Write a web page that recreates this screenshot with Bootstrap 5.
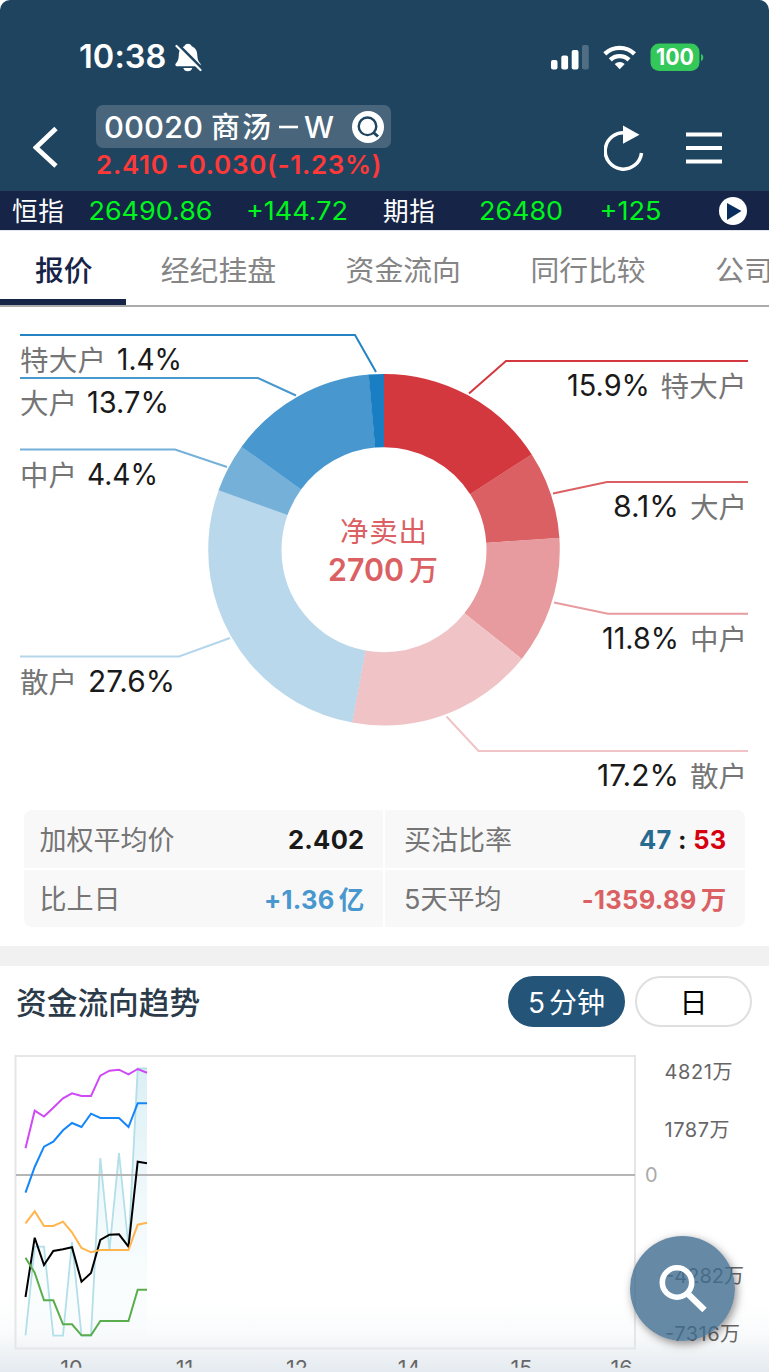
<!DOCTYPE html>
<html lang="zh-CN">
<head>
<meta charset="utf-8">
<meta name="viewport" content="width=device-width, initial-scale=1">
<title>00020 商汤－W</title>
<link href="https://cdn.jsdelivr.net/npm/bootstrap@5.3.0/dist/css/bootstrap.min.css" rel="stylesheet">
<style>
  html { background: #fff; }
  body { font-family: Inter, "Noto Sans CJK SC", sans-serif; width: 769px; height: 1372px; overflow: hidden; background: #fff; line-height: 1; white-space: nowrap; }
  svg { display: block; flex: none; }
  .app-head { background: #1e4460; height: 191px; border-radius: 10px 10px 0 0; color: #fff; }
  .status-bar { height: 105px; padding: 10px 65px 0 79px; }
  .clock { font-size: 32.5px; font-weight: 600; letter-spacing: .1px; }
  .title-bar { height: 86px; padding: 0 46px 0 33px; }
  .stock-pill { background: #48657b; border-radius: 7px; height: 43px; width: 295px; padding: 0 7px 0 8px; font-size: 29px; font-weight: 500; }
  .quote { color: #ff3838; font-size: 26px; font-weight: 600; line-height: 34px; letter-spacing: .7px; }
  .ticker { background: #152447; height: 39px; padding: 0 22px 0 12px; color: #fff; font-size: 26px; }
  .tab-strip { height: 77px; border-bottom: 2px solid #ababab; border-top: 1px solid #e4e4ec; flex-wrap: nowrap; overflow: hidden; }
  .tab-strip .nav-link { color: #858585; font-size: 28.8px; font-weight: 400; line-height: 74px; height: 74px; padding: 3px 0 0; margin: 0 34.8px; flex: none; border-radius: 0; }
  .tab-strip .nav-link.active { color: #152447; font-weight: 500; margin: 0; padding: 3px 34px 0 35px; width: 126px; box-shadow: inset 0 -6px #152447; }
  .pie-area { height: 503px; }
  .stats { height: 117px; margin: 0 24px; border-radius: 8px; overflow: hidden; display: grid; grid-template-columns: 359px 360px; grid-template-rows: 58px 57px; gap: 2px; }
  .stats > div { background: #f8f8f8; color: #757575; font-size: 27px; font-weight: 400; padding: 2px 18.5px 0 15.5px; }
  .stats > div:nth-child(even) { padding-left: 19px; }
  .stats strong { font-size: 25.5px; font-weight: 700; letter-spacing: .3px; color: #1a1a1a; }
  .band { height: 20px; background: #f1f1f1; margin-top: 19px; }
  .trend-head { height: 79px; padding: 10px 17px 0 16px; }
  .trend-head h2 { font-size: 30.7px; font-weight: 500; color: #2b3b4a; margin: 11px 0 0; line-height: 32px; }
  .range-btn { width: 117px; height: 51px; border-radius: 26px; font-size: 28px; line-height: 1; padding: 2px 0 0; border: 2px solid #dfdfdf; color: #000; font-weight: 400; }
  .range-btn.active { background: #245478 !important; border-color: #245478 !important; color: #fff !important; }
  .trend-area { height: 327px; background: linear-gradient(#fff 78%, #fafbfc 88%, #e4eaef 100%); }
  .zoom-fab { left: 630px; top: 1236px; width: 105px; height: 105px; background: rgba(64,109,143,.8); border: 0; border-radius: 50%; box-shadow: 2px 3px 9px rgba(50,40,40,.5); padding: 0; }
</style>
</head>
<body class="position-relative">
<header class="app-head">
  <div class="status-bar d-flex align-items-center">
    <span class="clock">10:38</span>
    <svg style="margin-left:7px" width="28" height="30" viewBox="173 43 28 30">
      <path d="M187 43.8c2 0 3.200 1 3.700 2.500 4 1.500 5.500 5 5.600 9 .1 4 1.200 6.400 3 8.300.9 1 .4 2.700-1 2.700h-22.500c-1.400 0-1.900-1.700-1-2.700 1.800-2 2.900-4.300 3-8.300.1-4 1.500-7.500 5.500-9 .5-1.500 1.700-2.500 3.700-2.500zM182.300 68h9c-.5 2-2.200 3.300-4.500 3.300s-4-1.300-4.500-3.300z" fill="#fff"/>
      <path d="M177.300 44.800L201 68.500" stroke="#1e4460" stroke-width="3"/>
      <path d="M175.500 46L199.500 70" stroke="#fff" stroke-width="2.200" stroke-linecap="round"/>
    </svg>
    <svg class="ms-auto" width="154" height="32" viewBox="550 42 154 32">
      <g fill="#fff"><rect x="551" y="60" width="6.500" height="9.500" rx="2"/><rect x="561.300" y="55.500" width="6.800" height="14" rx="2"/><rect x="571.700" y="50" width="6.800" height="19.500" rx="2"/><rect x="582" y="45" width="6.800" height="24.500" rx="2" opacity=".22"/></g>
      <g fill="none" stroke="#fff" stroke-width="4.400"><path d="M604.800 53.800a21.500 21.500 0 0 1 29.700 0"/><path d="M610.300 59.900a13.500 13.500 0 0 1 18.700 0"/></g>
      <path d="M619.700 69.300l-5-5.300a7.500 7.500 0 0 1 10 0z" fill="#fff"/>
      <rect x="650.500" y="43.500" width="49" height="27.500" rx="8.500" fill="#34c759"/><path d="M701 54c3 .8 3 6.200 0 7z" fill="#34c759"/>
      <text x="675" y="65.300" font-size="22.500" font-weight="700" fill="#fff" text-anchor="middle" textLength="38" lengthAdjust="spacingAndGlyphs">100</text>
    </svg>
  </div>
  <div class="title-bar d-flex">
    <svg class="mt-3" width="26" height="52" viewBox="33 121 26 52"><path d="M56 128.500L36 147.500l20 18.500" fill="none" stroke="#fff" stroke-width="4.800"/></svg>
    <div style="margin-left:37px">
      <div class="stock-pill d-flex align-items-center">
        <svg width="234" height="43" viewBox="104 105 234 43" fill="#fff" font-size="29" font-weight="500"><text x="104" y="137.500" font-size="30.300" textLength="99" lengthAdjust="spacingAndGlyphs">00020</text><text x="211" y="138" textLength="60">商汤</text><path d="M279 127h19" stroke="#fff" stroke-width="2.600"/><text x="304" y="137.500" font-size="30.300" textLength="30" lengthAdjust="spacingAndGlyphs">W</text></svg>
        <svg class="ms-auto" width="32" height="32" viewBox="0 0 32 32"><circle cx="16" cy="16" r="16" fill="#fff"/><circle cx="15.500" cy="15.300" r="8.800" fill="none" stroke="#1e4460" stroke-width="2.400"/><path d="M21.500 21.500l4.500 4" stroke="#1e4460" stroke-width="3"/></svg>
      </div>
      <div class="quote">2.410 -0.030(-1.23%)</div>
    </div>
    <svg class="ms-auto" style="margin-top:15px" width="119" height="60" viewBox="604 120 119 60"><path d="M626 132.900A18.200 18.200 0 1 0 641.500 153" fill="none" stroke="#fff" stroke-width="3.500"/><path d="M623 125.500l16.500 9.300-16.500 9z" fill="#fff"/><path d="M686 134.500h36M686 148h36M686 161.500h36" stroke="#fff" stroke-width="4"/></svg>
  </div>
</header>
<div class="ticker d-flex align-items-center">
  <svg width="652" height="39" viewBox="12 191 652 39" font-size="25.700" fill="#fff"><g><text x="12" y="220.500" textLength="52">恒指</text><text x="383" y="220.500" textLength="52">期指</text></g><g fill="#00f51d"><text x="88.500" y="220" textLength="124" lengthAdjust="spacingAndGlyphs">26490.86</text><text x="246" y="220" textLength="102" lengthAdjust="spacingAndGlyphs">+144.72</text><text x="479" y="220" textLength="84" lengthAdjust="spacingAndGlyphs">26480</text><text x="599.500" y="220" textLength="62" lengthAdjust="spacingAndGlyphs">+125</text></g></svg>
  <svg class="ms-auto" width="28" height="28" viewBox="0 0 28 28"><circle cx="14" cy="14" r="14" fill="#fff"/><path d="M8 6l14.500 8L8 23z" fill="#0b2d5e"/></svg>
</div>
<nav class="nav tab-strip">
  <a class="nav-link active" href="#">报价</a>
  <a class="nav-link" href="#">经纪挂盘</a>
  <a class="nav-link" href="#">资金流向</a>
  <a class="nav-link" href="#">同行比较</a>
  <a class="nav-link" href="#">公司</a>
</nav>
<main>
  <svg class="pie-area" width="769" height="503" viewBox="0 307 769 503">
    <g fill="none" stroke-width="73.300" transform="rotate(-90 384 549.700)">
      <circle cx="384" cy="549.700" r="139.150" pathLength="360" stroke="#d4383f" stroke-dasharray="57.200 400"/>
      <circle cx="384" cy="549.700" r="139.150" pathLength="360" stroke="#db6063" stroke-dasharray="29.100 400" stroke-dashoffset="-57.100"/>
      <circle cx="384" cy="549.700" r="139.150" pathLength="360" stroke="#e79b9f" stroke-dasharray="42.300 400" stroke-dashoffset="-86.100"/>
      <circle cx="384" cy="549.700" r="139.150" pathLength="360" stroke="#f0c3c6" stroke-dasharray="62.100 400" stroke-dashoffset="-128.400"/>
      <circle cx="384" cy="549.700" r="139.150" pathLength="360" stroke="#bad8ec" stroke-dasharray="99.500 400" stroke-dashoffset="-190.400"/>
      <circle cx="384" cy="549.700" r="139.150" pathLength="360" stroke="#75b0d9" stroke-dasharray="16.200 400" stroke-dashoffset="-289.800"/>
      <circle cx="384" cy="549.700" r="139.150" pathLength="360" stroke="#4897cf" stroke-dasharray="49.200 400" stroke-dashoffset="-305.900"/>
      <circle cx="384" cy="549.700" r="139.150" pathLength="360" stroke="#1a7fc2" stroke-dasharray="5 400" stroke-dashoffset="-355"/>
    </g>
    <g fill="none" stroke-width="2">
      <path d="M20 335H355L376 372" stroke="#2583c4"/>
      <path d="M20 378H258L296 395.500" stroke="#4897cf"/>
      <path d="M20 449.500H175L227 467" stroke="#75b0d9"/>
      <path d="M20 656.500H179L230 638" stroke="#b5d5ea"/>
      <path d="M748 361H506L469 393.500" stroke="#d4383f"/>
      <path d="M748 482H607L553 493.500" stroke="#db6063"/>
      <path d="M748 613.700H608L554 602.500" stroke="#e79b9f"/>
      <path d="M748 751H478.500L446.500 716.500" stroke="#f0c3c6"/>
    </g>
    <g font-size="28.500" fill="#757575">
      <text x="20" y="370.500" textLength="86">特大户</text><text x="20" y="413.500" textLength="57">大户</text><text x="20" y="485.500" textLength="57">中户</text><text x="20" y="692.500" textLength="57">散户</text>
      <text x="660.500" y="396.500" textLength="86">特大户</text><text x="690" y="517.500" textLength="57">大户</text><text x="690" y="649.500" textLength="57">中户</text><text x="690" y="786.500" textLength="57">散户</text>
    </g>
    <g font-size="29.500" fill="#1a1a1a">
      <text x="117" y="370" textLength="65" lengthAdjust="spacingAndGlyphs">1.4%</text><text x="87" y="413" textLength="82" lengthAdjust="spacingAndGlyphs">13.7%</text><text x="87" y="485" textLength="71" lengthAdjust="spacingAndGlyphs">4.4%</text><text x="88" y="692" textLength="87" lengthAdjust="spacingAndGlyphs">27.6%</text>
      <text x="567" y="396" textLength="83" lengthAdjust="spacingAndGlyphs">15.9%</text><text x="613" y="517" textLength="66" lengthAdjust="spacingAndGlyphs">8.1%</text><text x="602" y="649" textLength="77" lengthAdjust="spacingAndGlyphs">11.8%</text><text x="597" y="786" textLength="82" lengthAdjust="spacingAndGlyphs">17.2%</text>
    </g>
    <g fill="#db6063"><text x="340" y="541.500" font-size="28.500" textLength="87">净卖出</text><text x="328" y="580.500" font-size="31.500" font-weight="600" textLength="76" lengthAdjust="spacingAndGlyphs">2700</text><text x="409" y="581" font-size="29" font-weight="500">万</text></g>
  </svg>
  <section class="stats">
    <div class="d-flex align-items-center justify-content-between"><span>加权平均价</span><strong>2.402</strong></div>
    <div class="d-flex align-items-center justify-content-between"><span>买沽比率</span><strong><span style="color:#286b91">47</span> : <span style="color:#d7000f">53</span></strong></div>
    <div class="d-flex align-items-center justify-content-between"><span>比上日</span><strong style="color:#4897cf">+1.36<span class="ms-1">亿</span></strong></div>
    <div class="d-flex align-items-center justify-content-between"><span>5天平均</span><strong style="color:#db6063">-1359.89<span class="ms-1">万</span></strong></div>
  </section>
  <div class="band"></div>
  <section>
    <div class="trend-head d-flex justify-content-between">
      <h2>资金流向趋势</h2>
      <div class="d-flex gap-2"><button class="btn range-btn active">5<span style="margin-left:4px">分钟</span></button><button class="btn range-btn" style="margin-left:2px">日</button></div>
    </div>
    <svg class="trend-area" width="769" height="327" viewBox="0 1045 769 327">
      <defs><linearGradient id="flow" x1="0" y1="0" x2="0" y2="1"><stop offset="0" stop-color="#cfeaf1" stop-opacity=".75"/><stop offset="1" stop-color="#e8f6fa" stop-opacity=".1"/></linearGradient><clipPath id="axis"><path d="M0 1350h769v17.700H0z"/></clipPath></defs>
      <path d="M15.500 1348.500V1056H635V1348.500z" fill="none" stroke="#e5e6e7" stroke-width="2"/>
      <path d="M25.500 1335.300L34.700 1246.700 44 1246.700 53.300 1335.700H63L72 1242 81.500 1335.700H91L100.300 1158 109.500 1250 119 1153 128.500 1247 137.700 1068.500H147V1336z" fill="url(#flow)"/>
      <path d="M25.500 1335.300L34.700 1246.700 44 1246.700 53.300 1335.700H63L72 1242 81.500 1335.700H91L100.300 1158 109.500 1250 119 1153 128.500 1247 137.700 1068.500H147" fill="none" stroke="#b2dfe8" stroke-width="1.800"/>
      <path d="M16 1175H635" stroke="#b5b5b5" stroke-width="2"/>
      <g fill="none" stroke-width="2">
        <path stroke="#cf49f5" d="M25.500 1148.300L34.700 1110.700 44 1116.500 53.300 1107.700 63 1098.300 72 1093.300 81.500 1096H91L100.300 1075.700 109.500 1070.700 119 1069.700 128.500 1074.300 137.700 1069 147 1072.700"/>
        <path stroke="#1486fa" d="M25.500 1192.700L34.700 1167 44 1146.700 53.300 1141.700 63 1130.300 72 1123 81.500 1127 91 1113.700 100.300 1118H119L128.500 1127 137.700 1103.300H147"/>
        <path stroke="#000" d="M25.500 1297L34.700 1237.700 44 1265 53.300 1251 63 1249.300 72 1247.300 81.500 1281.700 91 1273 100.300 1240 109.500 1234.700 119 1234.300 128.500 1246.700 137.700 1161.700 147 1163.300"/>
        <path stroke="#ffb54b" d="M25.500 1223.300L34.700 1211.300 44 1226H53.300L63 1221.700 72 1232.300 81.500 1248 91 1252.300 100.300 1250H128.500L137.700 1224.700 147 1222.700"/>
        <path stroke="#59ad4c" d="M25.500 1257.700L34.700 1272.700 44 1300.300H53.300L63 1324.300H72L81.500 1335.300H91L100.300 1321H128.500L137.700 1289.700H147"/>
      </g>
      <g font-size="20" fill="#666">
        <text x="664.500" y="1079" textLength="68">4821万</text><text x="664.500" y="1137" textLength="65">1787万</text><text x="645" y="1182" fill="#aaa">0</text><text x="665" y="1283" textLength="79">-4282万</text><text x="665" y="1341" textLength="75">-7316万</text>
        <g clip-path="url(#axis)" font-size="21.500" text-anchor="middle"><text x="71.500" y="1376">10</text><text x="184.500" y="1376">11</text><text x="297" y="1376">12</text><text x="409" y="1376">14</text><text x="521.500" y="1376">15</text><text x="621.500" y="1376">16</text></g>
      </g>
    </svg>
  </section>
</main>
<button class="btn zoom-fab position-absolute" aria-label="放大">
  <svg width="105" height="105" viewBox="630 1236 105 105" fill="none" stroke="#fff"><circle cx="677" cy="1282.500" r="14.700" stroke-width="5.600"/><path d="M688 1294L704.500 1310" stroke-width="6.200"/></svg>
</button>
<script src="https://cdn.jsdelivr.net/npm/bootstrap@5.3.0/dist/js/bootstrap.bundle.min.js"></script>
</body>
</html>
